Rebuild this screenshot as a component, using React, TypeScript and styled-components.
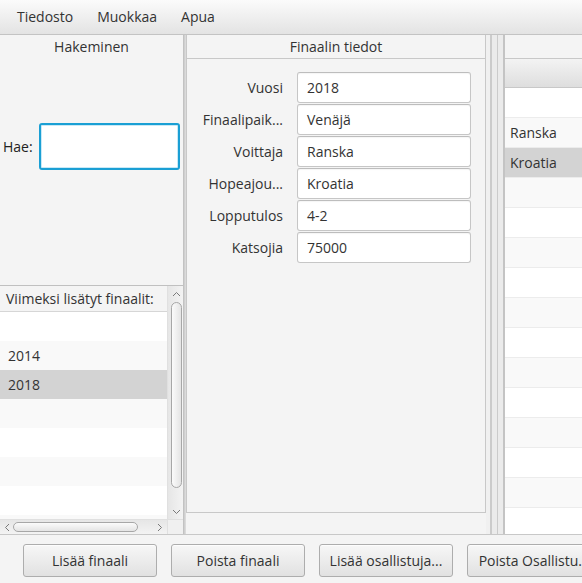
import React from "react";
import styled, { createGlobalStyle } from "styled-components";

const Global = createGlobalStyle`
  html, body { margin: 0; padding: 0; background: #f4f4f4; }
  body { font-family: "Open Sans", "Noto Sans", sans-serif; font-size: 14px; color: #333; }
  * { box-sizing: border-box; }
`;

const Window = styled.div`
  width: 582px;
  height: 583px;
  overflow: hidden;
  display: flex;
  flex-direction: column;
  background: #f4f4f4;
`;

const MenuBar = styled.div`
  flex: none;
  height: 35px;
  display: flex;
  align-items: center;
  gap: 24px;
  padding-left: 17px;
  padding-bottom: 1px;
  background: linear-gradient(#fbfbfb, #e3e3e3);
  border-bottom: 1px solid #c3c3c3;
`;

const MenuItem = styled.span`
  color: #333;
  font-size: 14px;
`;

const Main = styled.div`
  flex: none;
  height: 500px;
  display: flex;
  border-bottom: 1px solid #c8c8c8;
  overflow: hidden;
`;

const LeftPane = styled.div`
  flex: none;
  width: 183px;
  display: flex;
  flex-direction: column;
`;

const PaneTitle = styled.div<{ $line?: boolean }>`
  flex: none;
  height: 24px;
  display: flex;
  align-items: center;
  justify-content: center;
  padding-bottom: 1px;
  color: #333;
  ${(p) => (p.$line ? "border-bottom: 1px solid #c8c8c8;" : "")}
`;

const SearchRow = styled.div`
  flex: none;
  margin-top: 64px;
  display: flex;
  align-items: center;
  padding: 0 3px;
`;

const SearchLabel = styled.span`
  flex: 1;
  color: #222;
`;

const SearchField = styled.div`
  width: 141px;
  height: 47px;
  background: #fff;
  border: 2px solid #1a9fd4;
  border-radius: 3px;
  box-shadow: inset 0 0 0 1px #c9e9f6;
`;

const ListBox = styled.div`
  margin-top: auto;
  flex: none;
  height: 249px;
  border-top: 1px solid #c0c0c0;
  display: grid;
  grid-template-columns: 167px 16px;
  grid-template-rows: 1fr 15px;
  background: #fff;
`;

const ListContent = styled.div`
  overflow: hidden;
  display: flex;
  flex-direction: column;
  background: #fff;
`;

const ListHeader = styled.div`
  flex: none;
  height: 26px;
  display: flex;
  align-items: center;
  padding-left: 6px;
  padding-bottom: 1px;
  background: #f4f4f4;
  border-bottom: 1px solid #d6d6d6;
  white-space: nowrap;
  color: #333;
`;

const Row = styled.div<{
  $odd?: boolean;
  $selected?: boolean;
  $h: number;
  $lined?: boolean;
  $pad: number;
}>`
  flex: none;
  height: ${(p) => p.$h}px;
  display: flex;
  align-items: center;
  padding-left: ${(p) => p.$pad}px;
  padding-bottom: 1px;
  white-space: nowrap;
  color: #333;
  background: ${(p) => (p.$selected ? "#d3d3d3" : p.$odd ? "#f9f9f9" : "#ffffff")};
  ${(p) => (p.$lined ? "border-bottom: 1px solid #ececec;" : "")}
`;

const VScroll = styled.div`
  display: flex;
  flex-direction: column;
  align-items: center;
  padding: 2px 0 2px 1px;
  background: linear-gradient(to right, #e6e6e6, #f3f3f3);
  border-left: 1px solid #e0e0e0;
`;

const HScroll = styled.div`
  display: flex;
  align-items: center;
  padding: 0 2px 0 1px;
  background: linear-gradient(#e6e6e6, #f3f3f3);
  border-top: 1px solid #e0e0e0;
`;

const Corner = styled.div`
  background: #f0f0f0;
  border-top: 1px solid #e0e0e0;
  border-left: 1px solid #e0e0e0;
`;

const ArrowBox = styled.div`
  flex: none;
  width: 12px;
  height: 12px;
  display: flex;
  align-items: center;
  justify-content: center;
`;

const VThumb = styled.div`
  flex: none;
  margin-top: 2px;
  width: 11px;
  height: 186px;
  border: 1px solid #a7a7a7;
  border-radius: 6px;
  background: linear-gradient(to right, #fbfbfb, #e4e4e4);
`;

const HThumb = styled.div`
  flex: none;
  width: 125px;
  height: 10px;
  border: 1px solid #a7a7a7;
  border-radius: 6px;
  background: linear-gradient(#fbfbfb, #e4e4e4);
`;

const Spacer = styled.div`
  flex: 1;
`;

const Splitter = styled.div`
  flex: none;
  width: 3px;
  background: #cfcfcf;
  border-left: 1px solid #c2c2c2;
  border-right: 1px solid #dadada;
`;

const MiddlePane = styled.div`
  flex: none;
  width: 300px;
  display: flex;
  flex-direction: column;
`;

const Titled = styled.div`
  flex: none;
  height: 478px;
  display: flex;
  flex-direction: column;
  border-left: 1px solid #c8c8c8;
  border-right: 1px solid #c8c8c8;
  border-bottom: 1px solid #c8c8c8;
`;

const FormGrid = styled.div`
  display: grid;
  grid-template-columns: 84px 174px;
  grid-auto-rows: 31px;
  column-gap: 14px;
  row-gap: 1px;
  padding: 13px 0 0 12px;
`;

const FieldLabel = styled.div`
  align-self: center;
  text-align: right;
  white-space: nowrap;
  overflow: hidden;
  color: #333;
  padding-bottom: 1px;
`;

const TextField = styled.div`
  display: flex;
  align-items: center;
  padding: 0 0 1px 9px;
  background: #fff;
  border: 1px solid #c6c6c6;
  border-top-color: #bdbdbd;
  border-radius: 3px;
  box-shadow: inset 0 1px 1px rgba(0, 0, 0, 0.04);
  color: #333;
`;

const DoubleDivider = styled.div`
  flex: none;
  width: 19px;
  background: linear-gradient(
    to right,
    #f0f0f0 0 4px,
    #cbcbcb 4px 6px,
    #ebebeb 6px 11px,
    #cbcbcb 11px 12px,
    #ebebeb 12px 17px,
    #c4c4c4 17px 19px
  );
`;

const RightPane = styled.div`
  flex: 1;
  min-width: 0;
  display: flex;
  flex-direction: column;
  overflow: hidden;
`;

const TableHeader = styled.div`
  flex: none;
  height: 29px;
  background: linear-gradient(#f3f3f3, #dedede);
  border-bottom: 1px solid #c8c8c8;
`;

const TableBody = styled.div`
  flex: 1;
  display: flex;
  flex-direction: column;
  overflow: hidden;
  background: #fff;
`;

const ButtonBar = styled.div`
  flex: 1;
  display: flex;
  align-items: flex-start;
  gap: 14px;
  padding: 9px 0 0 23px;
  overflow: hidden;
`;

const Button = styled.div`
  flex: none;
  width: 134px;
  height: 33px;
  display: flex;
  align-items: center;
  justify-content: center;
  padding-bottom: 1px;
  white-space: nowrap;
  overflow: hidden;
  color: #333;
  border: 1px solid #adadad;
  border-radius: 3px;
  background: linear-gradient(#f7f7f7, #e1e1e1);
  box-shadow: inset 0 1px 0 #fdfdfd;
`;

const Chevron = ({ dir }: { dir: "up" | "down" | "left" | "right" }) => {
  const pts: Record<string, string> = {
    up: "1,6 4.5,2.5 8,6",
    down: "1,3 4.5,6.5 8,3",
    left: "6,1 2.5,4.5 6,8",
    right: "3,1 6.5,4.5 3,8",
  };
  return (
    <svg width="9" height="9" viewBox="0 0 9 9">
      <polyline points={pts[dir]} fill="none" stroke="#7a7a7a" strokeWidth="1" />
    </svg>
  );
};

const fields: [string, string][] = [
  ["Vuosi", "2018"],
  ["Finaalipaik...", "Venäjä"],
  ["Voittaja", "Ranska"],
  ["Hopeajou...", "Kroatia"],
  ["Lopputulos", "4-2"],
  ["Katsojia", "75000"],
];

const leftRows = ["", "2014", "2018", "", "", "", "", ""];
const rightRows = ["", "Ranska", "Kroatia", "", "", "", "", "", "", "", "", "", "", "", "", ""];

export default function App() {
  return (
    <>
      <Global />
      <Window>
        <MenuBar>
          <MenuItem>Tiedosto</MenuItem>
          <MenuItem>Muokkaa</MenuItem>
          <MenuItem>Apua</MenuItem>
        </MenuBar>
        <Main>
          <LeftPane>
            <PaneTitle>Hakeminen</PaneTitle>
            <SearchRow>
              <SearchLabel>Hae:</SearchLabel>
              <SearchField />
            </SearchRow>
            <ListBox>
              <ListContent>
                <ListHeader>Viimeksi lisätyt finaalit:</ListHeader>
                {leftRows.map((r, i) => (
                  <Row key={i} $h={29} $pad={8} $odd={i % 2 === 1} $selected={i === 2}>
                    {r}
                  </Row>
                ))}
              </ListContent>
              <VScroll>
                <ArrowBox>
                  <Chevron dir="up" />
                </ArrowBox>
                <VThumb />
                <Spacer />
                <ArrowBox>
                  <Chevron dir="down" />
                </ArrowBox>
              </VScroll>
              <HScroll>
                <ArrowBox>
                  <Chevron dir="left" />
                </ArrowBox>
                <HThumb />
                <Spacer />
                <ArrowBox>
                  <Chevron dir="right" />
                </ArrowBox>
              </HScroll>
              <Corner />
            </ListBox>
          </LeftPane>
          <Splitter />
          <MiddlePane>
            <Titled>
              <PaneTitle $line>Finaalin tiedot</PaneTitle>
              <FormGrid>
                {fields.map(([l, v]) => (
                  <React.Fragment key={l}>
                    <FieldLabel>{l}</FieldLabel>
                    <TextField>{v}</TextField>
                  </React.Fragment>
                ))}
              </FormGrid>
            </Titled>
          </MiddlePane>
          <DoubleDivider />
          <RightPane>
            <PaneTitle $line />
            <TableHeader />
            <TableBody>
              {rightRows.map((r, i) => (
                <Row key={i} $h={30} $pad={5} $odd={i % 2 === 1} $selected={i === 2} $lined>
                  {r}
                </Row>
              ))}
            </TableBody>
          </RightPane>
        </Main>
        <ButtonBar>
          <Button>Lisää finaali</Button>
          <Button>Poista finaali</Button>
          <Button>Lisää osallistuja...</Button>
          <Button>Poista Osallistu...</Button>
        </ButtonBar>
      </Window>
    </>
  );
}
